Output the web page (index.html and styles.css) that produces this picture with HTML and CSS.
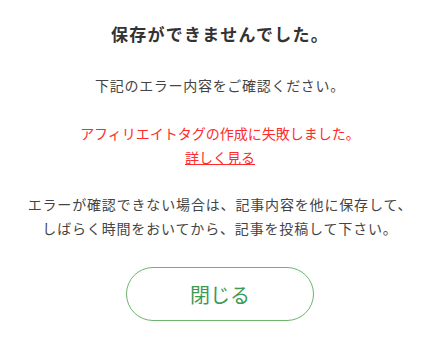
FILE: index.html
```html
<!DOCTYPE html>
<html lang="ja">
<head>
<meta charset="utf-8">
<link rel="stylesheet" href="styles.css">
</head>
<body>
<div class="dialog">
  <h1 class="title">保存ができませんでした。</h1>
  <p class="lead">下記のエラー内容をご確認ください。</p>
  <div class="error">
    <p class="error-msg">アフィリエイトタグの作成に失敗しました。</p>
    <a class="error-link" href="#">詳しく見る</a>
  </div>
  <p class="note">エラーが確認できない場合は、記事内容を他に保存して、<br>しばらく時間をおいてから、記事を投稿して下さい。</p>
  <div class="actions">
    <button class="close-btn" type="button">閉じる</button>
  </div>
</div>
</body>
</html>
```
FILE: styles.css
```css
html, body {
  margin: 0;
  padding: 0;
  background: #fff;
}
body {
  font-family: "Noto Sans CJK JP", "Noto Sans", sans-serif;
  color: #444;
}
.dialog {
  width: 440px;
  height: 345px;
  box-sizing: border-box;
  padding-top: 22px;
  text-align: center;
  display: flex;
  flex-direction: column;
  align-items: center;
}
.title {
  margin: 0;
  font-size: 17px;
  line-height: 24px;
  font-weight: bold;
  letter-spacing: 1.3px;
  color: #333;
}
.lead {
  margin: 27px 0 0;
  font-size: 14px;
  line-height: 24px;
  letter-spacing: 0.05em;
  color: #444;
}
.error {
  margin-top: 24px;
  display: flex;
  flex-direction: column;
  align-items: center;
  color: #ff2a2a;
  font-size: 14px;
  line-height: 24px;
}
.error-msg {
  margin: 0;
}
.error-link {
  color: #ff2a2a;
  text-decoration: underline;
}
.note {
  margin: 23px 0 0;
  font-size: 14px;
  line-height: 24px;
  letter-spacing: 0.06em;
  color: #444;
}
.actions {
  margin-top: 27px;
}
.close-btn {
  width: 188px;
  height: 54px;
  border: 1.5px solid #6cb46e;
  border-radius: 27px;
  background: #fff;
  color: #3d9a56;
  font-family: "Noto Sans CJK JP", "Noto Sans", sans-serif;
  font-size: 20px;
  cursor: pointer;
}
```
